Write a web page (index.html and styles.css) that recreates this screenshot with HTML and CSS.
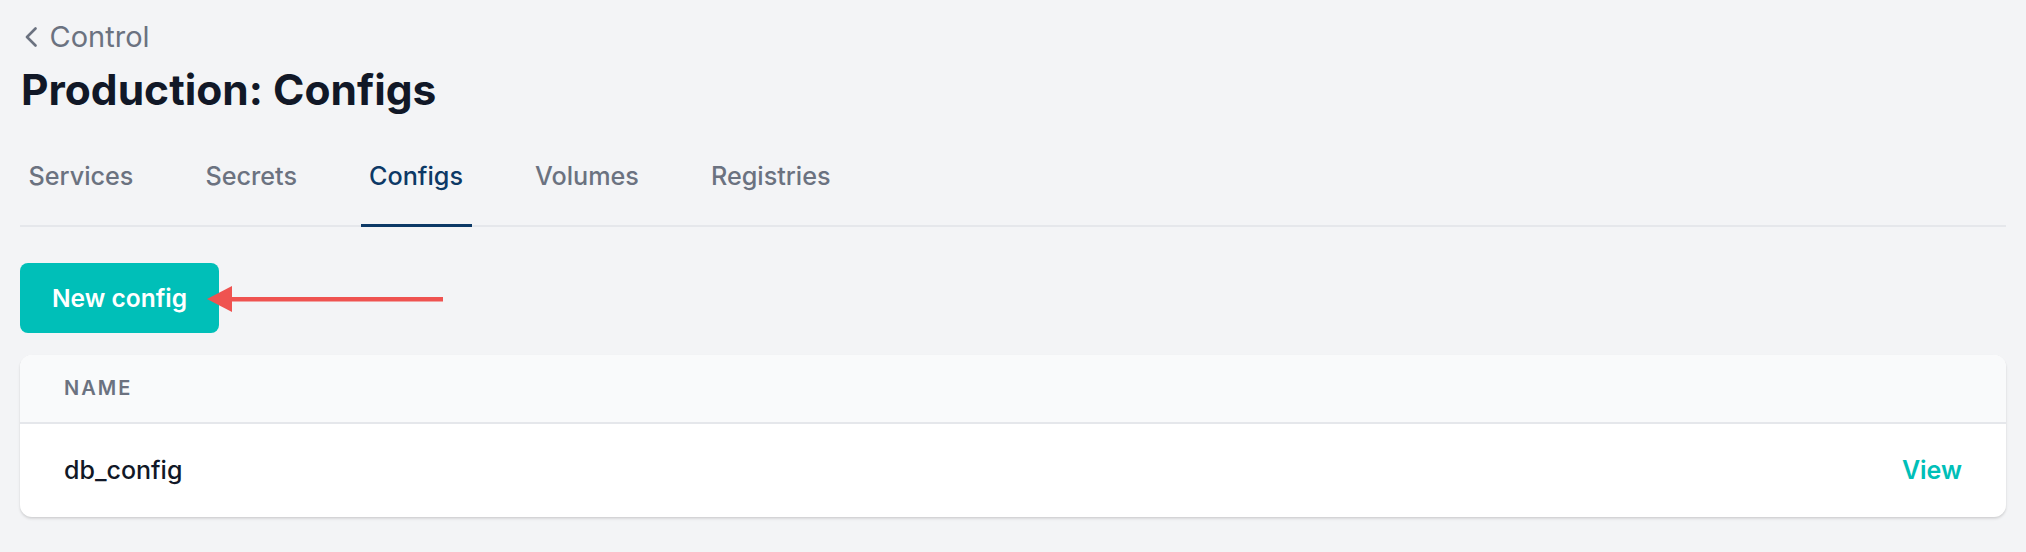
FILE: index.html
```html
<!DOCTYPE html>
<html lang="en">
<head>
<meta charset="utf-8">
<title>Production: Configs</title>
<link rel="stylesheet" href="styles.css">
</head>
<body>
<div class="page">
  <a class="back" href="#">
    <svg class="back-icon" width="14" height="20" viewBox="0 0 14 20"><path d="M11.5 1.5 L3 10 L11.5 18.5" fill="none" stroke="#6b7280" stroke-width="2.6" stroke-linecap="round" stroke-linejoin="round"/></svg>
    <span>Control</span>
  </a>
  <h1 class="title">Production: Configs</h1>
  <nav class="tabs">
    <a class="tab" href="#">Services</a>
    <a class="tab" href="#">Secrets</a>
    <a class="tab active" href="#">Configs</a>
    <a class="tab" href="#">Volumes</a>
    <a class="tab" href="#">Registries</a>
  </nav>
  <div class="toolbar">
    <button class="btn-primary">New config</button>
    <svg class="annot-arrow" width="236" height="28" viewBox="0 0 236 28"><polygon points="0,14 25,1 25,27" fill="#ef5350"/><rect x="22" y="12" width="214" height="4.5" fill="#ef5350"/></svg>
  </div>
  <div class="card">
    <div class="card-head">Name</div>
    <div class="card-row">
      <span class="row-name">db_config</span>
      <a class="row-link" href="#">View</a>
    </div>
  </div>
</div>
</body>
</html>
```

FILE: styles.css
```css
* { box-sizing: border-box; }
html, body { margin: 0; padding: 0; }
body {
  background: #f3f4f6;
  font-family: Inter, "Noto Sans", "Liberation Sans", sans-serif;
  color: #111827;
}
.page {
  padding: 19px 20px 20px 20px;
}
.back {
  display: flex;
  align-items: center;
  gap: 11.5px;
  height: 36px;
  padding-left: 4px;
  color: #6b7280;
  text-decoration: none;
  font-size: 29px;
  line-height: 36px;
  font-weight: 400;
}
.back-icon { display: block; }
.title {
  margin: 11px 0 0 1px;
  font-size: 42.5px;
  line-height: 48px;
  font-weight: 700;
  color: #111827;
}
.tabs {
  margin-top: 46px;
  display: flex;
  gap: 55px;
  border-bottom: 2px solid #e5e7eb;
}
.tab {
  display: block;
  padding: 0 8.5px 32px 8.5px;
  margin-bottom: -2px;
  border-bottom: 2px solid transparent;
  font-size: 25.2px;
  line-height: 32px;
  font-weight: 500;
  color: #6b7280;
  text-decoration: none;
}
.tab.active {
  color: #0c3966;
  border-bottom: 3px solid #0c3966;
  margin-bottom: -2.5px;
}
.toolbar {
  position: relative;
  margin-top: 36px;
  display: flex;
}
.btn-primary {
  border: 0;
  border-radius: 8px;
  background: #00bfb8;
  color: #ffffff;
  font-family: inherit;
  font-size: 24.5px;
  line-height: 32px;
  font-weight: 600;
  padding: 19px 32px;
}
.annot-arrow {
  position: absolute;
  left: 187px;
  top: 22px;
}
.card {
  margin-top: 22px;
  background: #ffffff;
  border-radius: 12px;
  box-shadow: 0 2px 3px rgba(0, 0, 0, 0.10), 0 1px 2px rgba(0, 0, 0, 0.06);
  overflow: hidden;
}
.card-head {
  height: 69px;
  padding: 0 44px;
  display: flex;
  align-items: center;
  background: #f9fafb;
  border-bottom: 2px solid #e5e7eb;
  text-transform: uppercase;
  font-size: 20px;
  font-weight: 600;
  letter-spacing: 0.1em;
  color: #6b7280;
}
.card-row {
  height: 93px;
  padding: 0 44px;
  display: flex;
  align-items: center;
  justify-content: space-between;
}
.row-name {
  font-size: 25px;
  font-weight: 500;
  color: #111827;
}
.row-link {
  font-size: 25px;
  font-weight: 600;
  color: #00bfb8;
  text-decoration: none;
}
```
